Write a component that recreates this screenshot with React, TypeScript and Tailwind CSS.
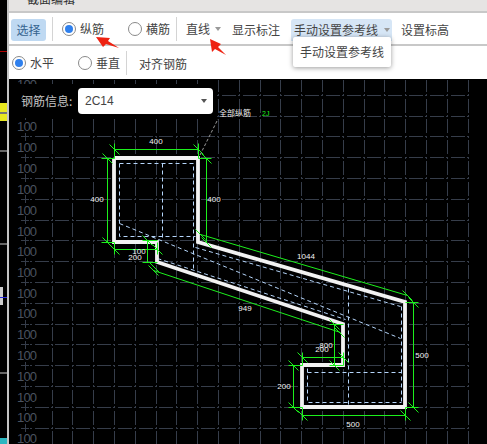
const FONT = "font-['Noto_Sans_CJK_SC','Liberation_Sans',sans-serif]";

const gridX = Array.from({ length: 21 }, (_, i) => 52 + i * 20.8);
const gridY = Array.from({ length: 17 }, (_, i) => 428 - i * 20.8);
const labelY = [84, 126, 147, 168, 189, 210, 231, 251, 272, 293, 313, 334, 355, 376, 397, 417, 438];

const rebar =
  "114,158 198,158 198,242 405,302 405,407 302,407 302,365 343,365 343,324 157,262 157,242 114,242 114,158";

const dashed = [
  "119,163 193,163 193,270",
  "119,163 119,236 195,236",
  "162,163 162,240",
  "119,223 400,338",
  "195,247 400,306",
  "157,258 345,319",
  "401,306 401,402",
  "307,368 307,402 401,402",
  "307,372 401,372",
  "348,288 348,407",
];

// green dimension lines
const dims: number[][] = [
  [114, 149, 198, 149],
  [114, 143, 114, 158],
  [198, 143, 198, 158],
  [107, 158, 107, 242],
  [101, 158, 114, 158],
  [101, 242, 114, 242],
  [206, 158, 206, 242],
  [198, 158, 211, 158],
  [114, 249, 157, 249],
  [114, 242, 114, 254],
  [157, 242, 157, 254],
  [147, 240, 147, 262],
  [142, 240, 157, 240],
  [142, 262, 157, 262],
  [200, 234, 407, 295],
  [153, 270, 340, 332],
  [413, 302, 413, 407],
  [405, 302, 418, 302],
  [405, 407, 418, 407],
  [302, 415, 405, 415],
  [302, 407, 302, 420],
  [405, 407, 405, 420],
  [293, 365, 293, 407],
  [288, 365, 302, 365],
  [288, 407, 302, 407],
  [334, 324, 334, 365],
  [329, 324, 343, 324],
  [329, 365, 343, 365],
  [302, 357, 343, 357],
  [302, 352, 302, 365],
  [343, 352, 343, 365],
];

const ticks = [
  [114, 149], [198, 149], [107, 158], [107, 242], [206, 158], [206, 242], [114, 249], [157, 249],
  [147, 240], [154, 267], [200, 234], [407, 295], [413, 302], [413, 407], [302, 415], [405, 415],
  [293, 365], [293, 407], [334, 324], [339, 332], [334, 365], [302, 357], [343, 357], [153, 270],
];

const dimLabels = [
  ["400", 156, 144],
  ["400", 97, 202],
  ["400", 214, 202],
  ["100", 139, 254],
  ["200", 135, 260],
  ["800", 326, 348],
  ["200", 322, 352],
  ["1044", 306, 259],
  ["949", 245, 311],
  ["500", 422, 358],
  ["500", 353, 427],
  ["200", 284, 389],
] as const;

function Radio({ on }: { on?: boolean }) {
  return (
    <span className="flex h-[14px] w-[14px] shrink-0 items-center justify-center rounded-full border border-[#8a8a8a] bg-white">
      {on && <span className="h-[8px] w-[8px] rounded-full bg-[#2f80ed]" />}
    </span>
  );
}

function Caret() {
  return <span className="h-0 w-0 border-x-[3px] border-t-[4px] border-x-transparent border-t-[#999]" />;
}

function Sep() {
  return <span className="block h-[24px] w-px bg-[#d4d4d4]" />;
}

export default function App() {
  return (
    <div className={`flex h-[444px] w-[487px] overflow-hidden bg-black text-[12px] text-[#444] ${FONT}`}>
      {/* window behind, only a sliver shows */}
      <div className="relative h-full w-[9px] shrink-0 border-r-2 border-[#c4c4c4] bg-black">
        <div className="absolute left-0 top-[51px] h-px w-[7px] bg-[#b00000]" />
        <div className="absolute left-0 top-[103px] h-[18px] w-[7px] bg-[#e8e820]" />
        <div className="absolute left-0 top-[112px] h-[2px] w-[7px] bg-[#777]" />
        <div className="absolute left-0 top-[150px] h-[2px] w-[7px] bg-[#666]" />
        <div className="absolute left-0 top-[243px] h-[2px] w-[7px] bg-[#666]" />
        <div className="absolute left-0 top-[287px] h-[18px] w-[3px] bg-[#ccc]" />
        <div className="absolute left-0 top-[297px] h-px w-[7px] bg-[#2a2ae0]" />
        <div className="absolute left-0 top-[372px] h-[2px] w-[7px] bg-[#666]" />
        <div className="absolute left-0 top-[438px] h-[6px] w-[7px] bg-[#2bb6c0]" />
      </div>

      <div className="flex min-w-0 flex-1 flex-col">
        <div className="h-[13px] shrink-0 overflow-hidden border-b-2 border-[#c8c8c8] bg-[#e6e4e3] pl-[18px]">
          <div className="-mt-[9px] text-[12px] leading-[16px] text-[#333]">截面编辑</div>
        </div>

        <div className="flex h-[33px] shrink-0 items-center border-b-2 border-[#c8c8c8] bg-white">
          <button className="ml-[2px] mt-[3px] h-[22px] w-[35px] rounded-[3px] bg-[#bfd9f2] text-[#35648f]">选择</button>
          <span className="ml-[6px]"><Sep /></span>
          <span className="ml-[9px] flex items-center gap-[4px]"><Radio on />纵筋</span>
          <span className="ml-[24px] flex items-center gap-[4px]"><Radio />横筋</span>
          <span className="ml-[6px]"><Sep /></span>
          <span className="ml-[9px] mt-[1px] flex items-center gap-[5px]">直线<Caret /></span>
          <span className="ml-[11px] mt-[3px]">显示标注</span>
          <span className="ml-[11px] mt-[3px] flex h-[22px] w-[101px] items-center gap-[6px] rounded-t-[3px] bg-[#d6e6f6] pl-[3px]">
            手动设置参考线<Caret />
          </span>
          <span className="ml-[9px] mt-[3px]">设置标高</span>
        </div>

        <div className="flex h-[33px] shrink-0 items-center bg-white">
          <span className="ml-[3px] flex items-center gap-[4px]"><Radio on />水平</span>
          <span className="ml-[24px] flex items-center gap-[4px]"><Radio />垂直</span>
          <span className="ml-[6px]"><Sep /></span>
          <span className="ml-[12px] mt-[3px]">对齐钢筋</span>
        </div>

        <div className="relative min-h-0 flex-1 bg-black">
          <svg className="block h-full w-full" viewBox="9 79 478 365">
            <g stroke="#363d4a" strokeWidth="1" shapeRendering="crispEdges">
              {gridY.map((y) => (
                <line key={y} x1="25" y1={y} x2="468" y2={y} strokeDasharray="14 2.4 2 2.4" strokeDashoffset="11.2" />
              ))}
              {gridX.map((x) => (
                <line key={x} x1={x} y1="80" x2={x} y2="444" strokeDasharray="14 2.4 2 2.4" strokeDashoffset="2.2" />
              ))}
              {gridY.map((y) => (
                <g key={y}>
                  <line x1="25" y1={y - 4} x2="25" y2={y + 4} />
                  <line x1="21" y1={y} x2="29" y2={y} />
                </g>
              ))}
            </g>
            <g fill="#4a525f" fontFamily="'Liberation Sans', sans-serif" fontSize="13" fontWeight="300">
              {labelY.map((y) => (
                <text key={y} x="17" y={y + 5} textLength="20">100</text>
              ))}
            </g>
            <g transform="translate(0.5 0.5)" fill="none" stroke="#b5d5fa" strokeWidth="1" strokeDasharray="4 3">
              {dashed.map((p) => (
                <polyline key={p} points={p} />
              ))}
            </g>
            <polyline points={rebar} fill="none" stroke="#f2f2f2" strokeWidth="3.8" strokeLinejoin="miter" />
            <g transform="translate(0.5 0.5)" stroke="#1cf01c" strokeWidth="1">
              {dims.map(([x1, y1, x2, y2], i) => (
                <line key={i} x1={x1} y1={y1} x2={x2} y2={y2} />
              ))}
              {ticks.map(([x, y], i) => (
                <line key={i} x1={x - 5} y1={y - 5} x2={x + 5} y2={y + 5} />
              ))}
            </g>
            <line x1="200" y1="155" x2="218" y2="119" stroke="#999" strokeWidth="1" strokeDasharray="3 2" />
            <g fill="#f4f4f4" fontFamily="'Liberation Sans', sans-serif" fontSize="8" textAnchor="middle">
              {dimLabels.map(([t, x, y], i) => (
                <text key={i} x={x} y={y}>{t}</text>
              ))}
            </g>
            <text x="219" y="116" fill="#eee" fontSize="8">全部纵筋</text>
            <text x="262" y="116" fill="#1cf01c" fontSize="7" fontFamily="'Liberation Sans', sans-serif">2J</text>
          </svg>

          {/* rebar info form sits on top of the drawing */}
          <div className="absolute left-0 top-[5px] flex h-[34px] w-[207px] items-center bg-black pl-[12px]">
            <span className="w-[57px] text-[#c4c4c4]">钢筋信息:</span>
            <div className="flex h-[26px] w-[135px] items-center justify-between rounded-[4px] bg-white pl-[7px] pr-[6px] text-[#444]">
              <span className="font-['Liberation_Sans',sans-serif] text-[12px]">2C14</span>
              <span className="h-0 w-0 border-x-[3px] border-t-[4px] border-x-transparent border-t-[#555]" />
            </div>
          </div>
        </div>
      </div>

      {/* dropdown menu */}
      <div className="absolute left-[293px] top-[37px] flex h-[30px] w-[98px] items-center justify-center rounded-[2px] bg-white text-[12px] text-[#444] shadow-[0_1px_5px_rgba(0,0,0,0.4)]">
        手动设置参考线
      </div>

      {/* red annotation arrows */}
      <svg className="pointer-events-none absolute left-0 top-0" width="487" height="80">
        <path d="M96 37 L110 38 L108 41 L119 48 L106 44 L103 47 Z" fill="#ee2211" />
        <path d="M210 39 L221 44 L218 47 L226 55 L215 49 L212 52 Z" fill="#ee2211" />
      </svg>
    </div>
  );
}
